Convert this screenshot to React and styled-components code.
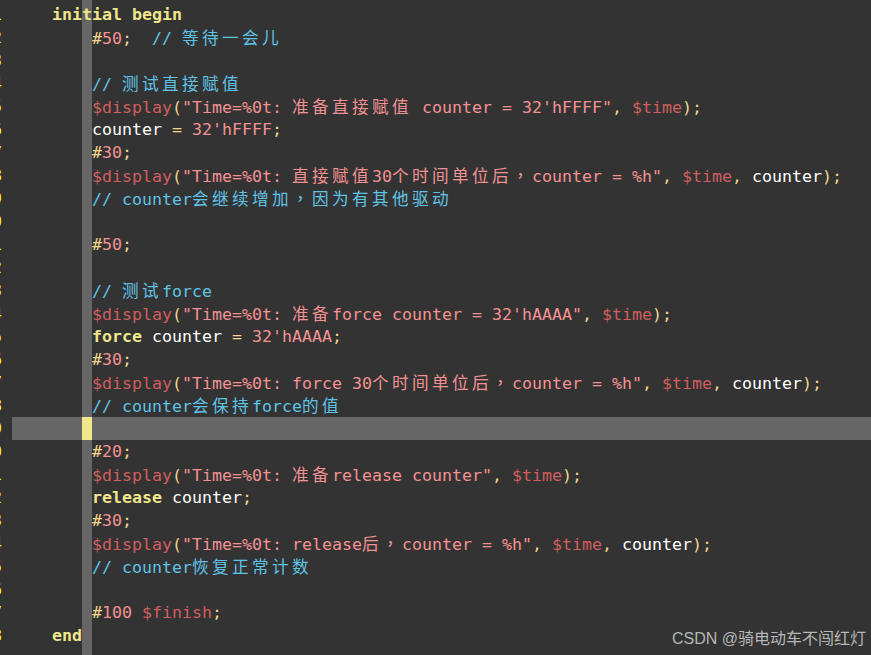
import styled, { createGlobalStyle } from 'styled-components';

const GlobalStyle = createGlobalStyle`
  html, body {
    margin: 0;
    padding: 0;
    background: #333333;
  }
  body {
    overflow: hidden;
  }
`;

const colors = {
  kw: '#f0e68c',
  cm: '#5fc3e6',
  str: '#f39292',
  num: '#f39292',
  sys: '#d05e5e',
  op: '#f2d68e',
  id: '#ffffff',
  pl: '#ffffff',
};

const CURSOR_COL = 7;
const FIRST_LINE_NR = 41;
const CURRENT_LINE = 18;

const Screen = styled.div`
  position: relative;
  height: 100vh;
  display: flex;
  flex-direction: column;
  overflow: hidden;
  background: #333333;
  font-family: "DejaVu Sans Mono", "Noto Sans CJK SC", monospace;
  font-size: 16.61px;
`;

const Row = styled.div`
  display: flex;
  flex: ${(p) => (p.$fill ? '1 1 auto' : '0 0 auto')};
  height: ${(p) => (p.$fill ? 'auto' : `${p.$h}px`)};
  line-height: 23px;
  white-space: pre;
  background: ${(p) => (p.$current ? '#666666' : 'transparent')};
`;

const Gutter = styled.span`
  flex: 0 0 12px;
  box-sizing: border-box;
  display: flex;
  justify-content: flex-end;
  padding-right: 10px;
  overflow: hidden;
  color: #ffff00;
  background: #333333;
`;

const Lead = styled.span`
  flex: 0 0 70px;
  overflow: hidden;
`;

const Cell = styled.span`
  flex: 0 0 10px;
  overflow: hidden;
  background: ${(p) => (p.$current ? '#f0e68c' : '#666666')};
`;

const Rest = styled.span`
  flex: 1 1 auto;
  min-width: 0;
  overflow: hidden;
`;

const Tok = styled.span`
  color: ${(p) => colors[p.$k]};
  font-weight: ${(p) => (p.$k === 'kw' ? 700 : 400)};
`;

const Wide = styled.span`
  font-family: "Noto Sans CJK SC", sans-serif;
  letter-spacing: 3.39px;
`;

const Punct = styled.span`
  font-family: "Noto Sans CJK TC", sans-serif;
  letter-spacing: 3.39px;
`;

const Watermark = styled.div`
  position: absolute;
  right: 5px;
  bottom: 6px;
  font-family: "Liberation Sans", "Noto Sans CJK SC", sans-serif;
  font-size: 16px;
  line-height: 20px;
  color: rgba(215, 215, 215, 0.82);
  white-space: nowrap;
`;

const in4 = ['pl', '    '];
const in8 = ['pl', '        '];
const sp = ['pl', ' '];

const lines = [
  [in4, ['kw', 'initial begin']],
  [in8, ['op', '#'], ['num', '50'], ['op', ';'], ['pl', '  '], ['cm', '// 等待一会儿']],
  [],
  [in8, ['cm', '// 测试直接赋值']],
  [in8, ['sys', '$display'], ['op', '('], ['str', `"Time=%0t: 准备直接赋值 counter = 32'hFFFF"`], ['op', ','], sp, ['sys', '$time'], ['op', ');']],
  [in8, ['id', 'counter'], sp, ['op', '='], sp, ['num', "32'hFFFF"], ['op', ';']],
  [in8, ['op', '#'], ['num', '30'], ['op', ';']],
  [in8, ['sys', '$display'], ['op', '('], ['str', '"Time=%0t: 直接赋值30个时间单位后，counter = %h"'], ['op', ','], sp, ['sys', '$time'], ['op', ','], sp, ['id', 'counter'], ['op', ');']],
  [in8, ['cm', '// counter会继续增加，因为有其他驱动']],
  [],
  [in8, ['op', '#'], ['num', '50'], ['op', ';']],
  [],
  [in8, ['cm', '// 测试force']],
  [in8, ['sys', '$display'], ['op', '('], ['str', `"Time=%0t: 准备force counter = 32'hAAAA"`], ['op', ','], sp, ['sys', '$time'], ['op', ');']],
  [in8, ['kw', 'force'], sp, ['id', 'counter'], sp, ['op', '='], sp, ['num', "32'hAAAA"], ['op', ';']],
  [in8, ['op', '#'], ['num', '30'], ['op', ';']],
  [in8, ['sys', '$display'], ['op', '('], ['str', '"Time=%0t: force 30个时间单位后，counter = %h"'], ['op', ','], sp, ['sys', '$time'], ['op', ','], sp, ['id', 'counter'], ['op', ');']],
  [in8, ['cm', '// counter会保持force的值']],
  [],
  [in8, ['op', '#'], ['num', '20'], ['op', ';']],
  [in8, ['sys', '$display'], ['op', '('], ['str', '"Time=%0t: 准备release counter"'], ['op', ','], sp, ['sys', '$time'], ['op', ');']],
  [in8, ['kw', 'release'], sp, ['id', 'counter'], ['op', ';']],
  [in8, ['op', '#'], ['num', '30'], ['op', ';']],
  [in8, ['sys', '$display'], ['op', '('], ['str', '"Time=%0t: release后，counter = %h"'], ['op', ','], sp, ['sys', '$time'], ['op', ','], sp, ['id', 'counter'], ['op', ');']],
  [in8, ['cm', '// counter恢复正常计数']],
  [],
  [in8, ['op', '#'], ['num', '100'], sp, ['sys', '$finish'], ['op', ';']],
  [in4, ['kw', 'end']],
];

// split a line's tokens into [before cursor column, at it, after it]
const split = (tokens, col) => {
  const out = [[], [], []];
  let pos = 0;
  tokens.forEach(([k, text]) => {
    const a = Math.min(Math.max(col - pos, 0), text.length);
    const b = Math.min(Math.max(col + 1 - pos, 0), text.length);
    if (a > 0) out[0].push([k, text.slice(0, a)]);
    if (b > a) out[1].push([k, text.slice(a, b)]);
    if (text.length > b) out[2].push([k, text.slice(b)]);
    pos += text.length;
  });
  return out;
};

const CJK = /([\u2e80-\u9fff\uff00-\uffef]+)/;

const renderWide = (part) =>
  part.split(/(，)/).map((p, i) =>
    i % 2 ? <Punct key={i}>{p}</Punct> : p && <Wide key={i}>{p}</Wide>
  );

const renderText = (text) =>
  text.split(CJK).map((part, i) => (i % 2 ? <span key={i}>{renderWide(part)}</span> : part));

const Tokens = ({ list }) =>
  list.map(([k, text], i) => (
    <Tok key={i} $k={k}>
      {renderText(text)}
    </Tok>
  ));

const CodeLine = ({ tokens, nr, current }) => {
  const [before, at, after] = split(tokens, CURSOR_COL);
  return (
    <Row $h={23} $current={current}>
      <Gutter>{nr}</Gutter>
      <Lead>
        <Tokens list={before} />
      </Lead>
      <Cell $current={current}>
        <Tokens list={at} />
      </Cell>
      <Rest>
        <Tokens list={after} />
      </Rest>
    </Row>
  );
};

const Filler = ({ h }) => (
  <Row $h={h} $fill={!h}>
    <Gutter />
    <Lead />
    <Cell />
    <Rest />
  </Row>
);

const App = () => (
  <Screen>
    <GlobalStyle />
    <Filler h={3} />
    {lines.map((tokens, i) => (
      <CodeLine
        key={i}
        tokens={tokens}
        nr={FIRST_LINE_NR + i}
        current={i === CURRENT_LINE}
      />
    ))}
    <Filler />
    <Watermark>CSDN @骑电动车不闯红灯</Watermark>
  </Screen>
);

export default App;
